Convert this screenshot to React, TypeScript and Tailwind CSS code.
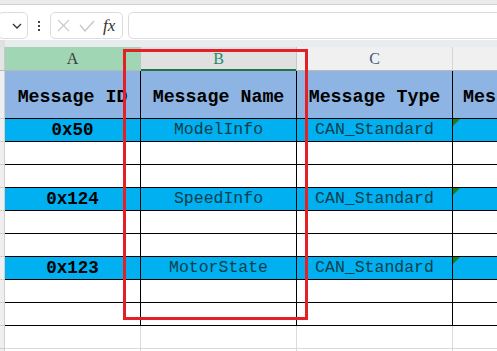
import React from "react";

const mono = { fontFamily: '"Liberation Mono", "DejaVu Sans Mono", monospace' };

type Row = { kind: "data" | "blank"; id?: string; name?: string; type?: string };

const rows: Row[] = [
  { kind: "data", id: "0x50", name: "ModelInfo", type: "CAN_Standard" },
  { kind: "blank" },
  { kind: "blank" },
  { kind: "data", id: "0x124", name: "SpeedInfo", type: "CAN_Standard" },
  { kind: "blank" },
  { kind: "blank" },
  { kind: "data", id: "0x123", name: "MotorState", type: "CAN_Standard" },
  { kind: "blank" },
  { kind: "blank" },
];

function FormulaBar() {
  return (
    <div className="h-[40px] flex flex-col">
      <div className="h-[4px] bg-[#ebebeb]" />
      <div className="h-[1px] bg-[#d2d2d2]" />
      <div className="flex-1 bg-white flex items-end pb-[1px]">
        <div className="h-[27px] w-[30px] -ml-[2px] border border-[#dcdcdc] rounded-[5px] flex items-center justify-end pr-[5px]">
          <svg width="10" height="6" viewBox="0 0 10 6" fill="none" stroke="#333" strokeWidth="1.3">
            <path d="M1 1l4 4 4-4" />
          </svg>
        </div>
        <div className="w-[22px] h-[27px] flex flex-col items-center justify-center gap-[2px]">
          <div className="w-[2px] h-[2px] bg-[#444]" />
          <div className="w-[2px] h-[2px] bg-[#444]" />
          <div className="w-[2px] h-[2px] bg-[#444]" />
        </div>
        <div className="h-[27px] w-[73px] border border-[#dcdcdc] rounded-[5px] flex items-center pl-[6px]">
          <svg width="13" height="13" viewBox="0 0 14 14" fill="none" stroke="#c4c4c4" strokeWidth="1.2">
            <path d="M1 1l12 12M13 1L1 13" />
          </svg>
          <svg className="ml-[9px]" width="16" height="12" viewBox="0 0 16 12" fill="none" stroke="#c4c4c4" strokeWidth="1.2">
            <path d="M1 5l5 6L15 1" />
          </svg>
          <span
            className="ml-[8px] text-[17px] italic text-[#333] leading-none"
            style={{ fontFamily: '"Liberation Serif", "DejaVu Serif", serif' }}
          >
            fx
          </span>
        </div>
        <div className="h-[27px] flex-1 ml-[5px] -mr-[4px] border border-[#dcdcdc] rounded-[5px]" />
      </div>
    </div>
  );
}

function ColHeaders() {
  const serif = { fontFamily: '"Liberation Serif", "DejaVu Serif", serif' };
  return (
    <div className="flex h-[24px] border-b border-[#b8b8b8]" style={serif}>
      <div className="w-[5px] bg-[#e4e4e4] border-r border-[#c8c8c8]" />
      <div className="w-[136px] bg-[#a0d6b4] border-r border-[#b8c8b8] flex items-center justify-center text-[16px] text-[#3c3c3c]">
        A
      </div>
      <div className="w-[156px] bg-[#e0e0e0] border-r border-[#c8c8c8] flex items-center justify-center text-[16px] text-[#1d8a6a] relative">
        B
        <div className="absolute left-0 right-0 -bottom-[1px] h-[2px] bg-[#217346]" />
      </div>
      <div className="w-[156px] bg-[#f0f0f0] border-r border-[#d6d6d6] flex items-center justify-center text-[16px] text-[#3e5a86]">
        C
      </div>
      <div className="flex-1 bg-[#f0f0f0]" />
    </div>
  );
}

function GreenTick() {
  return (
    <div className="absolute top-0 left-0 w-0 h-0 border-t-[7px] border-t-[#1e7b1e] border-r-[7px] border-r-transparent" />
  );
}

function DataRow({ r }: { r: Row }) {
  const bg = r.kind === "data" ? "bg-[#00b0f0]" : "bg-white";
  return (
    <div className="flex h-[23px]">
      <div className="w-[5px] bg-[#efefef] border-r border-b border-[#cfcfcf]" />
      <div
        className={`w-[136px] ${bg} border-r border-b border-black flex items-end justify-center pb-[1px] text-[17.5px] font-bold text-black leading-[20px]`}
        style={mono}
      >
        {r.id}
      </div>
      <div
        className={`w-[156px] ${bg} border-r border-b border-black flex items-end justify-center pb-[1px] text-[16.5px] text-[#0f3f4a] leading-[20px]`}
        style={mono}
      >
        {r.name}
      </div>
      <div
        className={`w-[156px] ${bg} border-r border-b border-black flex items-end justify-center pb-[1px] text-[16.5px] text-[#0f3f4a] leading-[20px]`}
        style={mono}
      >
        {r.type}
      </div>
      <div className={`flex-1 ${bg} border-b border-black relative`}>{r.kind === "data" && <GreenTick />}</div>
    </div>
  );
}

function EmptyRow() {
  return (
    <div className="flex h-[23px]">
      <div className="w-[5px] bg-[#efefef] border-r border-b border-[#cfcfcf]" />
      <div className="w-[136px] bg-white border-r border-b border-[#dadada]" />
      <div className="w-[156px] bg-white border-r border-b border-[#dadada]" />
      <div className="w-[156px] bg-white border-r border-b border-[#dadada]" />
      <div className="flex-1 bg-white border-b border-[#dadada]" />
    </div>
  );
}

export default function App() {
  return (
    <div className="w-[497px] h-[351px] overflow-hidden bg-white relative">
      <FormulaBar />
      <div className="h-[7px] bg-[#e9ecef] flex">
        <div className="w-[5px] bg-[#e0e0e0]" />
      </div>
      <ColHeaders />
      <div className="flex h-[48px]">
        <div className="w-[5px] bg-[#efefef] border-r border-b border-[#cfcfcf]" />
        {["Message ID", "Message Name", "Message Type"].map((t, i) => (
          <div
            key={t}
            className={`${i === 0 ? "w-[136px]" : "w-[156px]"} bg-[#8db4e2] border-r border-b border-black flex items-center justify-center pt-[6px] text-[18.3px] font-bold text-black whitespace-nowrap`}
            style={mono}
          >
            {t}
          </div>
        ))}
        <div
          className="flex-1 bg-[#8db4e2] border-b border-black flex items-center pl-[10px] pt-[6px] text-[18.3px] font-bold text-black whitespace-nowrap overflow-hidden"
          style={mono}
        >
          Mes
        </div>
      </div>
      {rows.map((r, i) => (
        <DataRow key={i} r={r} />
      ))}
      <EmptyRow />
      <EmptyRow />
      <div className="absolute left-[123px] top-[49px] w-[185px] h-[271px] border-[3px] border-[#e41f26] pointer-events-none" />
    </div>
  );
}
